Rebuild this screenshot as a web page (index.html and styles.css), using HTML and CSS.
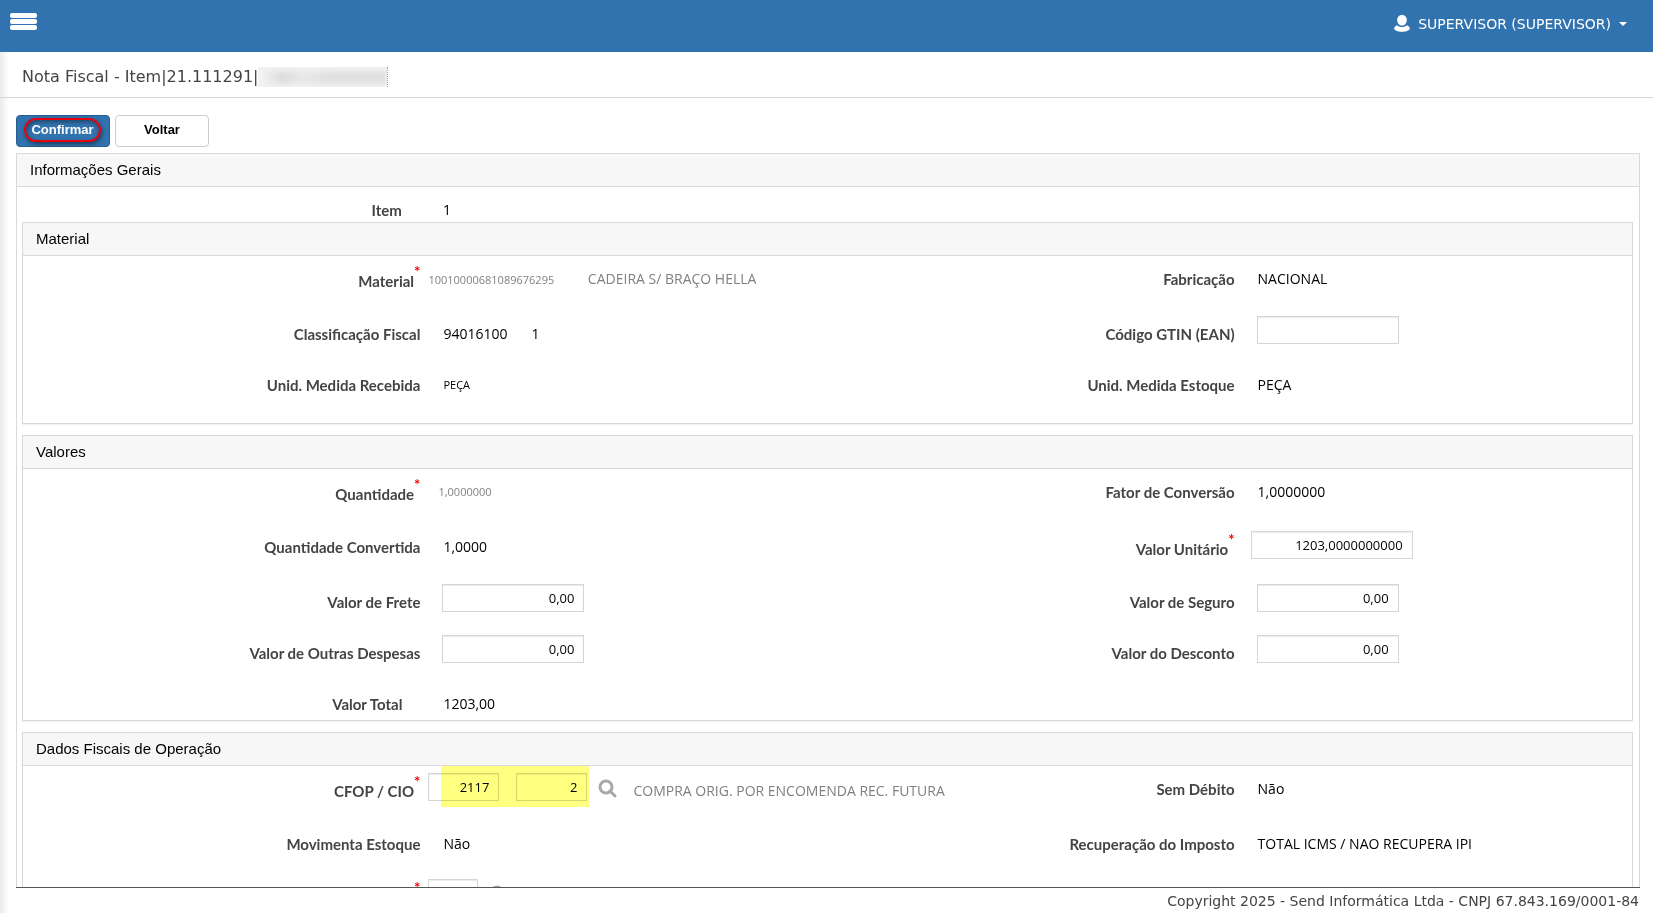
FILE: index.html
```html
<!DOCTYPE html>
<html lang="pt-BR">
<head>
    <meta charset="UTF-8">
    <meta name="viewport" content="width=device-width, initial-scale=1.0">
    <title>Nota Fiscal - Item</title>
    <link rel="stylesheet" href="styles.css">
</head>
<body>
    <header class="topbar">
        <button type="button" class="menu-toggle" aria-label="Menu">
            <svg width="28" height="20" viewBox="0 0 28 20" fill="#fff">
                <rect x="0" y="1" width="27" height="5" rx="2"/>
                <rect x="0" y="7" width="27" height="5" rx="2"/>
                <rect x="0" y="13" width="27" height="5" rx="2"/>
            </svg>
        </button>
        <button type="button" class="user-menu">
            <svg width="16" height="18" viewBox="0 0 16 18" fill="#fff">
                <path d="M8 0C4.900 0 3.200 2.200 3.200 5c0 2.900 1.900 5.600 4.800 5.600s4.800-2.700 4.800-5.600C12.800 2.200 11.100 0 8 0z"/>
                <path d="M3 10.200C1.200 11 .2 12.200.2 13.600c0 1.900 3.300 3.200 7.800 3.200s7.800-1.300 7.800-3.200c0-1.400-1-2.600-2.800-3.400C11.900 11.300 10.100 12 8 12s-3.900-.7-5-1.800z"/>
            </svg>
            <span>SUPERVISOR (SUPERVISOR)</span>
            <span class="caret"></span>
        </button>
    </header>

    <main class="page">
        <div class="title-bar">
            <h1>Nota Fiscal - Item|21.111291|</h1>
            <span class="redacted"></span>
        </div>

        <form class="content">
            <div class="actions">
                <button type="button" class="btn btn-primary"><span class="btn-mark">Confirmar</span></button>
                <button type="button" class="btn">Voltar</button>
            </div>

            <section class="panel panel-outer">
                <h2>Informações Gerais</h2>
                <div class="fields fields-outer">
                    <div class="row row-last">
                        <span class="label label-short">Item</span>
                        <div class="value">1</div>
                    </div>
                </div>

                <section class="panel">
                    <h2>Material</h2>
                    <div class="fields">
                        <div class="row row-req">
                            <span class="label req">Material</span>
                            <div class="value value-req">
                                <span class="small muted">10010000681089676295</span>
                                <span class="muted desc">CADEIRA S/ BRAÇO HELLA</span>
                            </div>
                            <span class="label">Fabricação</span>
                            <div class="value">NACIONAL</div>
                        </div>
                        <div class="row">
                            <span class="label">Classificação Fiscal</span>
                            <div class="value value-pair"><span>94016100</span><span>1</span></div>
                            <label class="label" for="gtin">Código GTIN (EAN)</label>
                            <div class="value value-input"><input type="text" id="gtin"></div>
                        </div>
                        <div class="row row-end">
                            <span class="label">Unid. Medida Recebida</span>
                            <div class="value small">PEÇA</div>
                            <span class="label">Unid. Medida Estoque</span>
                            <div class="value">PEÇA</div>
                        </div>
                    </div>
                </section>

                <section class="panel">
                    <h2>Valores</h2>
                    <div class="fields">
                        <div class="row row-req">
                            <span class="label req">Quantidade</span>
                            <div class="value small muted">1,0000000</div>
                            <span class="label">Fator de Conversão</span>
                            <div class="value">1,0000000</div>
                        </div>
                        <div class="row row-req">
                            <span class="label">Quantidade Convertida</span>
                            <div class="value">1,0000</div>
                            <label class="label req" for="unitario">Valor Unitário</label>
                            <div class="value value-input value-req"><input type="text" id="unitario" class="wide" value="1203,0000000000"></div>
                        </div>
                        <div class="row">
                            <label class="label" for="frete">Valor de Frete</label>
                            <div class="value value-input"><input type="text" id="frete" value="0,00"></div>
                            <label class="label" for="seguro">Valor de Seguro</label>
                            <div class="value value-input"><input type="text" id="seguro" value="0,00"></div>
                        </div>
                        <div class="row">
                            <label class="label" for="despesas">Valor de Outras Despesas</label>
                            <div class="value value-input"><input type="text" id="despesas" value="0,00"></div>
                            <label class="label" for="desconto">Valor do Desconto</label>
                            <div class="value value-input"><input type="text" id="desconto" value="0,00"></div>
                        </div>
                        <div class="row row-last">
                            <span class="label label-short">Valor Total</span>
                            <div class="value">1203,00</div>
                        </div>
                    </div>
                </section>

                <section class="panel">
                    <h2>Dados Fiscais de Operação</h2>
                    <div class="fields">
                        <div class="row row-req">
                            <label class="label req" for="cfop">CFOP / CIO</label>
                            <div class="value value-input value-req lookup">
                                <input type="text" id="cfop" class="code" value="2117">
                                <input type="text" class="code" aria-label="CIO" value="2">
                                <button type="button" class="search" aria-label="Pesquisar">
                                    <svg width="20" height="20" viewBox="0 0 20 20" fill="none" stroke="#aaa7aa">
                                        <circle cx="8" cy="8" r="6" stroke-width="3"/>
                                        <path d="M12 12l5 5" stroke-width="3" stroke-linecap="round"/>
                                    </svg>
                                </button>
                                <span class="muted">COMPRA ORIG. POR ENCOMENDA REC. FUTURA</span>
                                <span class="highlight"></span>
                            </div>
                            <span class="label">Sem Débito</span>
                            <div class="value">Não</div>
                        </div>
                        <div class="row">
                            <span class="label">Movimenta Estoque</span>
                            <div class="value">Não</div>
                            <span class="label">Recuperação do Imposto</span>
                            <div class="value">TOTAL ICMS / NAO RECUPERA IPI</div>
                        </div>
                        <div class="row row-req">
                            <span class="label req"></span>
                            <div class="value value-input value-req lookup">
                                <input type="text" class="short" aria-label="Código">
                                <button type="button" class="search" aria-label="Pesquisar">
                                    <svg width="20" height="20" viewBox="0 0 20 20" fill="none" stroke="#aaa7aa">
                                        <circle cx="8" cy="8" r="6" stroke-width="3"/>
                                        <path d="M12 12l5 5" stroke-width="3" stroke-linecap="round"/>
                                    </svg>
                                </button>
                            </div>
                        </div>
                    </div>
                </section>
            </section>
        </form>

        <footer class="footer">Copyright 2025 - Send Informática Ltda - CNPJ 67.843.169/0001-84</footer>
    </main>
</body>
</html>
```

FILE: styles.css
```css
* {
    box-sizing: border-box;
}
body {
    margin: 0;
    height: 100vh;
    display: flex;
    flex-direction: column;
    overflow: hidden;
    background-color: #fff;
    color: #000;
    font-family: "Trebuchet MS", "Open Sans", sans-serif;
    font-size: 14px;
    line-height: 20px;
}
button {
    cursor: pointer;
}

/* top bar */
.topbar {
    flex: none;
    height: 52px;
    padding: 12px 26px 0 10px;
    display: flex;
    justify-content: space-between;
    align-items: flex-start;
    background-color: #3173af;
}
.menu-toggle, .user-menu, .search {
    padding: 0;
    border: none;
    background: none;
}
.menu-toggle svg, .search svg {
    display: block;
}
.user-menu {
    display: flex;
    align-items: center;
    gap: 8px;
    color: #fff;
    font-family: Verdana, "DejaVu Sans", sans-serif;
    font-size: 14px;
    line-height: 24px;
}
.caret {
    border: 4px solid transparent;
    border-top-color: #fff;
    border-bottom: none;
}

/* page */
.page {
    flex: 1;
    min-height: 0;
    display: flex;
    flex-direction: column;
    background: linear-gradient(to right, #ebebeb, #fff 9px);
}
.title-bar {
    flex: none;
    height: 46px;
    padding: 4px 0 0 22px;
    display: flex;
    align-items: center;
    border-bottom: 1px solid #d6d6d6;
}
.title-bar h1 {
    margin: 0;
    color: #444;
    font-family: Verdana, "DejaVu Sans", sans-serif;
    font-size: 16px;
    font-weight: normal;
}
.redacted {
    width: 130px;
    height: 20px;
    background: linear-gradient(to right, #f6f6f6, #dedede 18%, #e8e8e8 35%, #e0e0e0 60%, #e0e0e0);
    box-shadow: inset 0 4px 5px #f2f2f2, inset 0 -3px 4px #f2f2f2;
    border-right: 1px dotted #8ab;
}
.content {
    flex: 1;
    min-height: 0;
    margin: 0 13px 0 16px;
    padding-top: 17px;
    overflow: hidden;
    border-bottom: 1px solid #555;
}
.actions {
    display: flex;
    gap: 5px;
    margin-bottom: 6px;
}
.btn {
    width: 94px;
    height: 32px;
    padding: 0 0 4px;
    border: 1px solid #ccc;
    border-radius: 4px;
    background-color: #fff;
    color: #000;
    font-family: Arial, "Liberation Sans", sans-serif;
    font-size: 13px;
    font-weight: bold;
}
.btn-primary {
    padding: 0;
    border-color: #255e93;
    background-color: #3173af;
    color: #fff;
}
.btn-mark {
    display: block;
    margin: 0 8px 2px 7px;
    height: 24px;
    line-height: 20px;
    border: 2px solid #e8000b;
    border-radius: 12px;
    box-shadow: 1px 2px 4px rgba(0, 0, 0, 0.5), inset 1px 2px 4px rgba(0, 0, 0, 0.4);
    white-space: nowrap;
}

/* panels */
.panel {
    margin-bottom: 11px;
    border: 1px solid #d9d9d9;
    box-shadow: 0 1px 1px rgba(0, 0, 0, 0.05);
    background-color: #fff;
}
.panel-outer {
    padding: 0 6px 0 5px;
}
.panel h2 {
    margin: 0;
    height: 33px;
    padding: 0 13px;
    border-bottom: 1px solid #d9d9d9;
    background-color: #f7f7f7;
    font-family: Arial, "Liberation Sans", sans-serif;
    font-size: 15px;
    font-weight: normal;
    line-height: 31px;
}
.panel-outer > h2 {
    margin: 0 -6px 0 -5px;
}
.fields {
    padding-top: 5px;
}

/* field rows */
.row {
    display: grid;
    grid-template-columns: 24.7% 1fr 200px 24.7%;
    min-height: 51px;
}
.row-req {
    min-height: 55px;
}
.row-end {
    min-height: 56px;
}
.row-last {
    min-height: 34px;
}
.fields-outer .row-last {
    min-height: 30px;
}
.label {
    padding-top: 8px;
    color: #444;
    font-family: "Trebuchet MS", Lato, sans-serif;
    font-size: 15px;
    font-weight: bold;
    text-align: right;
}
.label-short {
    padding-right: 18px;
}
.label.req {
    padding-top: 10px;
}
.label.req::after {
    content: "*";
    color: #f00;
    line-height: 0;
    vertical-align: 10px;
}
.value {
    padding: 8px 0 0 23px;
}
.value-input {
    padding-top: 0;
    padding-left: 22px;
}
.value-req {
    padding-left: 8px;
}
.value-input.value-req {
    padding-top: 2px;
}
.label.req + .value.small {
    padding-left: 18px;
}
.row .label.req + .value-input .wide {
    margin-left: 8px;
}
.small {
    font-size: 11px;
}
.muted {
    color: #808080;
}
.desc {
    margin-left: 30px;
}
.value-pair {
    display: flex;
    gap: 24px;
}
input {
    width: 142px;
    height: 28px;
    padding: 0 9px;
    border: 1px solid #d5d5d5;
    border-radius: 0;
    box-shadow: inset 0 1px 1px rgba(0, 0, 0, 0.08);
    background-color: #fff;
    color: #000;
    font-family: Tahoma, "Open Sans", sans-serif;
    font-size: 13px;
    text-align: right;
}
input.wide {
    width: 162px;
}
input.code {
    width: 71px;
}
input.short {
    width: 50px;
}

/* code lookup */
.lookup {
    position: relative;
    display: flex;
    align-items: flex-start;
}
.lookup .code + .code {
    margin-left: 17px;
}
.lookup .search {
    margin: 6px 15px 0 11px;
}
.lookup .muted {
    padding-top: 8px;
}
.highlight {
    position: absolute;
    top: -5px;
    left: 21px;
    width: 148px;
    height: 41px;
    background-color: #ffff80;
    mix-blend-mode: multiply;
    pointer-events: none;
}

.footer {
    flex: none;
    height: 25px;
    padding-right: 14px;
    color: #444;
    font-family: Verdana, "DejaVu Sans", sans-serif;
    font-size: 14px;
    line-height: 26px;
    text-align: right;
}
```
